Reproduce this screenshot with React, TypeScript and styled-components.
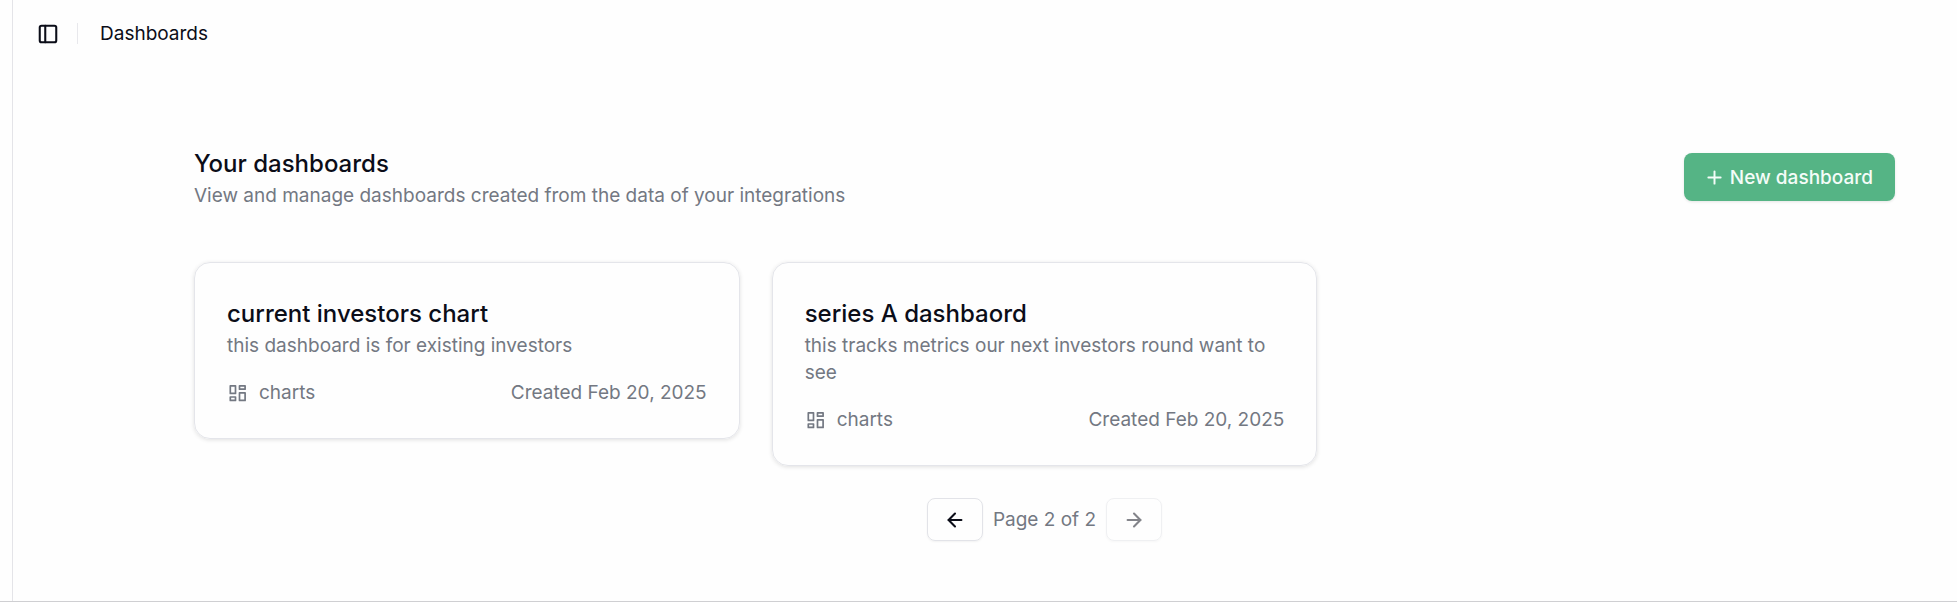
import React from "react";
import styled, { createGlobalStyle } from "styled-components";
import { ArrowLeft, ArrowRight, PanelLeft, Plus } from "lucide-react";

const GlobalStyle = createGlobalStyle`
  *, *::before, *::after { box-sizing: border-box; }
  body {
    margin: 0;
    background: #fefefe;
    color: #0b0d18;
    font-family: Inter, "Liberation Sans", sans-serif;
    font-size: 19px;
    line-height: 27px;
  }
  h1, h2, p { margin: 0; }
  button { font: inherit; color: inherit; }
`;

const Shell = styled.div`
  display: flex;
  min-height: 100vh;
  border-bottom: 1px solid #cfcfd2;
`;

const SidebarEdge = styled.aside`
  flex: none;
  width: 13px;
  border-right: 1px solid #e4e4e8;
`;

const Page = styled.div`
  flex: 1;
  min-width: 0;
`;

const TopBar = styled.header`
  display: flex;
  align-items: center;
  height: 67px;
  padding-left: 24px;
`;

const ToggleButton = styled.button`
  display: flex;
  padding: 0;
  border: 0;
  background: none;
`;

const Divider = styled.span`
  width: 1px;
  height: 21px;
  margin: 0 22px 0 18px;
  background: #e8e8ec;
`;

const Main = styled.main`
  display: flex;
  flex-direction: column;
  padding: 78px 62px 32px 181px;
`;

const Intro = styled.section`
  display: flex;
  align-items: center;
  justify-content: space-between;
  margin-bottom: 53px;
`;

const PageTitle = styled.h1`
  font-size: 24px;
  line-height: 37px;
  font-weight: 500;
`;

const CardTitle = styled(PageTitle).attrs({ as: "h2" })``;

const Muted = styled.p`
  color: #737882;
`;

const PrimaryButton = styled.button`
  display: flex;
  align-items: center;
  gap: 5px;
  height: 48px;
  padding: 0 22px 0 20px;
  border: 0;
  border-radius: 8px;
  background: #55b485;
  color: #f4fcf8;
  font-weight: 500;
  box-shadow: 0 1px 3px rgba(0, 0, 0, 0.1);
`;

const Grid = styled.div`
  display: grid;
  grid-template-columns: repeat(3, 1fr);
  align-items: start;
  gap: 32px;
`;

const Card = styled.article`
  padding: 32px;
  border: 1px solid #e4e5ea;
  border-radius: 16px;
  box-shadow: 0 1px 4px rgba(0, 0, 0, 0.12);
`;

const CardFooter = styled.div`
  display: flex;
  justify-content: space-between;
  margin-top: 20px;
  color: #737882;
`;

const Kind = styled.span`
  display: flex;
  align-items: center;
  gap: 10px;
`;

const Pager = styled.nav`
  display: flex;
  align-items: center;
  justify-content: center;
  gap: 10px;
  margin-top: 32px;
  color: #737882;
`;

const PagerButton = styled.button`
  display: flex;
  align-items: center;
  justify-content: center;
  width: 56px;
  height: 43px;
  padding: 0;
  border: 1px solid #e2e3e8;
  border-radius: 8px;
  background: none;
  color: #0b0d18;
  box-shadow: 0 1px 2px rgba(0, 0, 0, 0.05);
  &:disabled { opacity: 0.5; }
`;

function ChartsIcon() {
  return (
    <svg width="22" height="22" viewBox="0 0 22 22" fill="none" stroke="currentColor" strokeWidth="1.7" strokeLinejoin="round" aria-hidden="true">
      <rect x="3.3" y="3.8" width="5.2" height="7.6" />
      <rect x="12.5" y="3.8" width="5.6" height="3.4" />
      <rect x="12.5" y="10.8" width="5.6" height="7.6" />
      <rect x="3.3" y="15" width="5.2" height="3.4" />
    </svg>
  );
}

const dashboards = [
  { title: "current investors chart", text: "this dashboard is for existing investors", date: "Feb 20, 2025" },
  { title: "series A dashbaord", text: "this tracks metrics our next investors round want to see", date: "Feb 20, 2025" },
];

export default function App() {
  return (
    <>
      <GlobalStyle />
      <Shell>
        <SidebarEdge />
        <Page>
          <TopBar>
            <ToggleButton aria-label="Toggle sidebar"><PanelLeft size={22} strokeWidth={2.25} /></ToggleButton>
            <Divider />
            <span>Dashboards</span>
          </TopBar>
          <Main>
            <Intro>
              <div>
                <PageTitle>Your dashboards</PageTitle>
                <Muted>View and manage dashboards created from the data of your integrations</Muted>
              </div>
              <PrimaryButton><Plus size={21} strokeWidth={2.25} />New dashboard</PrimaryButton>
            </Intro>
            <Grid>
              {dashboards.map((d) => (
                <Card key={d.title}>
                  <CardTitle>{d.title}</CardTitle>
                  <Muted>{d.text}</Muted>
                  <CardFooter>
                    <Kind><ChartsIcon />charts</Kind>
                    <span>Created {d.date}</span>
                  </CardFooter>
                </Card>
              ))}
            </Grid>
            <Pager aria-label="Pagination">
              <PagerButton aria-label="Previous page"><ArrowLeft size={22} strokeWidth={2.25} /></PagerButton>
              <span>Page 2 of 2</span>
              <PagerButton aria-label="Next page" disabled><ArrowRight size={22} strokeWidth={2.25} /></PagerButton>
            </Pager>
          </Main>
        </Page>
      </Shell>
    </>
  );
}
